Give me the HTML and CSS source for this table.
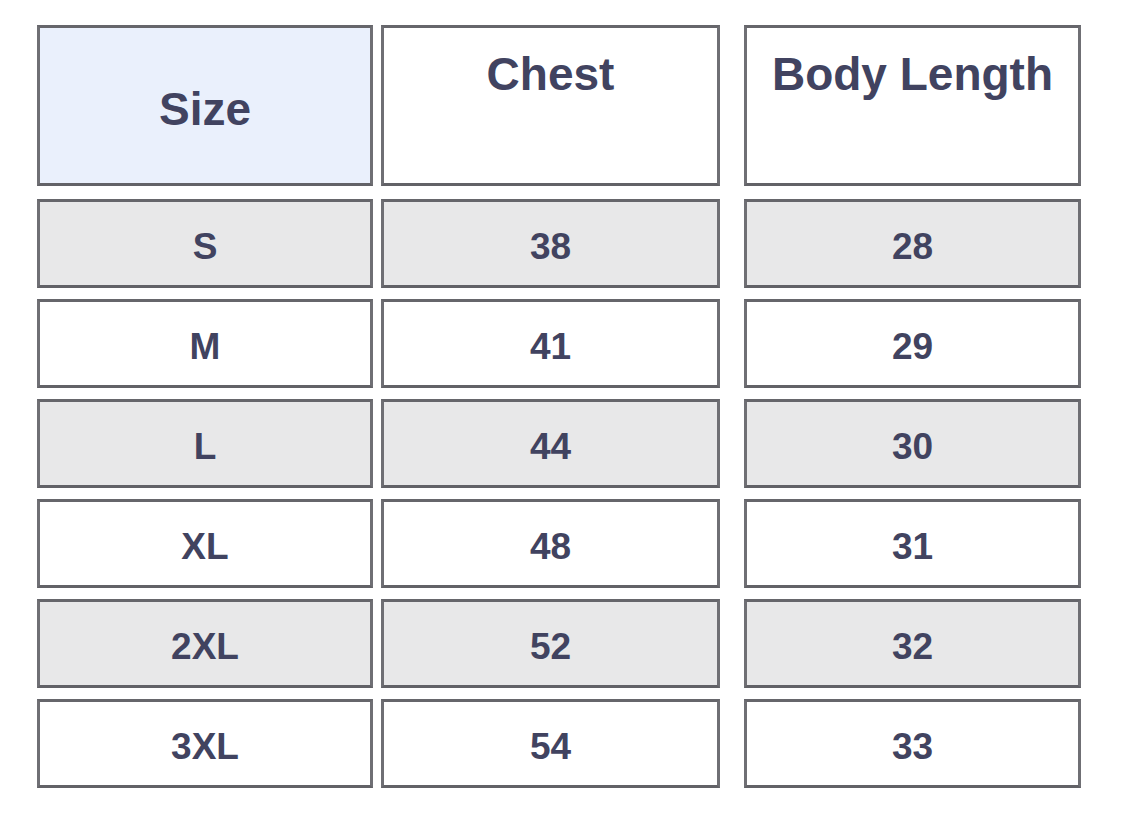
FILE: index.html
```html
<!DOCTYPE html>
<html lang="en">
<head>
<meta charset="utf-8">
<title>Size Chart</title>
<link rel="stylesheet" href="styles.css">
</head>
<body>
<div class="chart">
  <div class="cell head head-size">Size</div>
  <div class="cell head head-top">Chest</div>
  <div class="cell head head-top col3">Body Length</div>

  <div class="cell alt">S</div>
  <div class="cell alt">38</div>
  <div class="cell alt col3">28</div>

  <div class="cell">M</div>
  <div class="cell">41</div>
  <div class="cell col3">29</div>

  <div class="cell alt">L</div>
  <div class="cell alt">44</div>
  <div class="cell alt col3">30</div>

  <div class="cell">XL</div>
  <div class="cell">48</div>
  <div class="cell col3">31</div>

  <div class="cell alt">2XL</div>
  <div class="cell alt">52</div>
  <div class="cell alt col3">32</div>

  <div class="cell">3XL</div>
  <div class="cell">54</div>
  <div class="cell col3">33</div>
</div>
</body>
</html>
```

FILE: styles.css
```css
* { box-sizing: border-box; }

html, body {
  margin: 0;
  padding: 0;
  background: #ffffff;
}

body {
  font-family: "Liberation Sans", Arial, Helvetica, sans-serif;
  color: #414360;
}

.chart {
  display: grid;
  grid-template-columns: 336px 339px 337px;
  grid-template-rows: 163px repeat(6, 89px);
  column-gap: 8px;
  row-gap: 11px;
  padding: 25px 0 0 37px;
}

.cell {
  border: 3px solid #6f6f74;
  border-top-color: #66666b;
  border-bottom-color: #626267;
  background: #ffffff;
  display: flex;
  align-items: center;
  justify-content: center;
  font-weight: bold;
  font-size: 37px;
  line-height: 1;
  padding-top: 6px;
}

.col3 {
  margin-left: 16px;
  margin-right: -16px;
}

.alt {
  background: #e8e8e9;
}

.head {
  font-size: 46px;
  align-self: start;
  height: 161px;
  line-height: 1.15;
}

.head-size {
  background: #eaf0fc;
  padding-top: 8px;
}

.head-top {
  align-items: flex-start;
  padding-top: 20px;
}
```
